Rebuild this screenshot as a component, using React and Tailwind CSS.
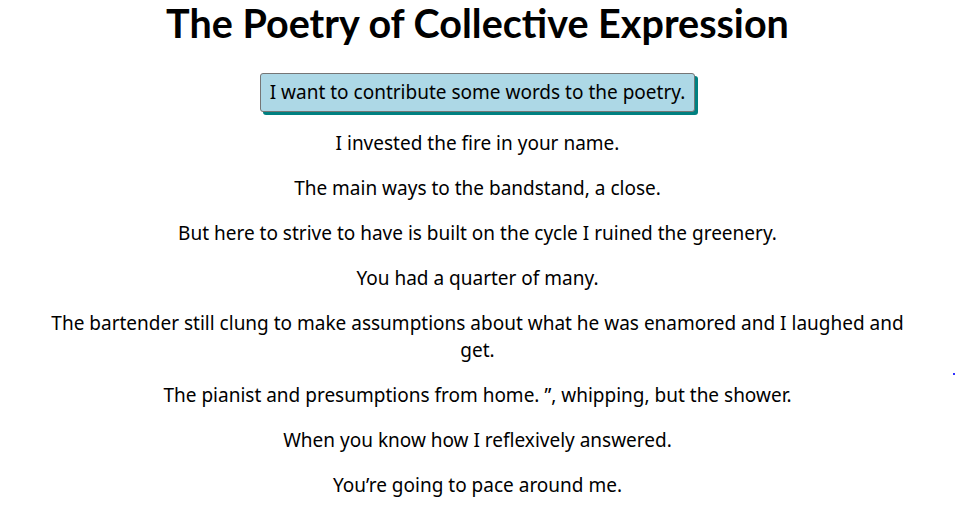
import React from 'react';

const lines = [
  'I invested the fire in your name.',
  'The main ways to the bandstand, a close.',
  'But here to strive to have is built on the cycle I ruined the greenery.',
  'You had a quarter of many.',
  'The bartender still clung to make assumptions about what he was enamored and I laughed and get.',
  'The pianist and presumptions from home. \u201d, whipping, but the shower.',
  'When you know how I reflexively answered.',
  'You\u2019re going to pace around me.',
];

const App = () => {
  return (
    <div className="relative min-h-screen bg-white text-black font-['Noto_Sans','Open_Sans',sans-serif]">
      <div className="mx-auto px-[48px] text-center">
        <h1 className="font-['Lato',sans-serif] text-[39.5px] leading-[44px] font-bold pt-[1px]">The Poetry of Collective Expression</h1>
        <div className="mt-[28px] flex justify-center">
          <button className="bg-[#add8e6] border border-[#767676] rounded-[3px] px-[9px] py-[5px] text-[19px] leading-[27px] shadow-[3px_3px_0_#008080]">
            I want to contribute some words to the poetry.
          </button>
        </div>
        <div className="mt-[15px]">
          {lines.map((line, i) => (
            <p key={i} className="text-[19px] leading-[27px] my-[18px]">
              {line}
            </p>
          ))}
        </div>
      </div>
      <div className="absolute left-[953px] top-[373px] w-[2px] h-[2px] bg-[#3030ff]" />
    </div>
  );
};

export default App;
